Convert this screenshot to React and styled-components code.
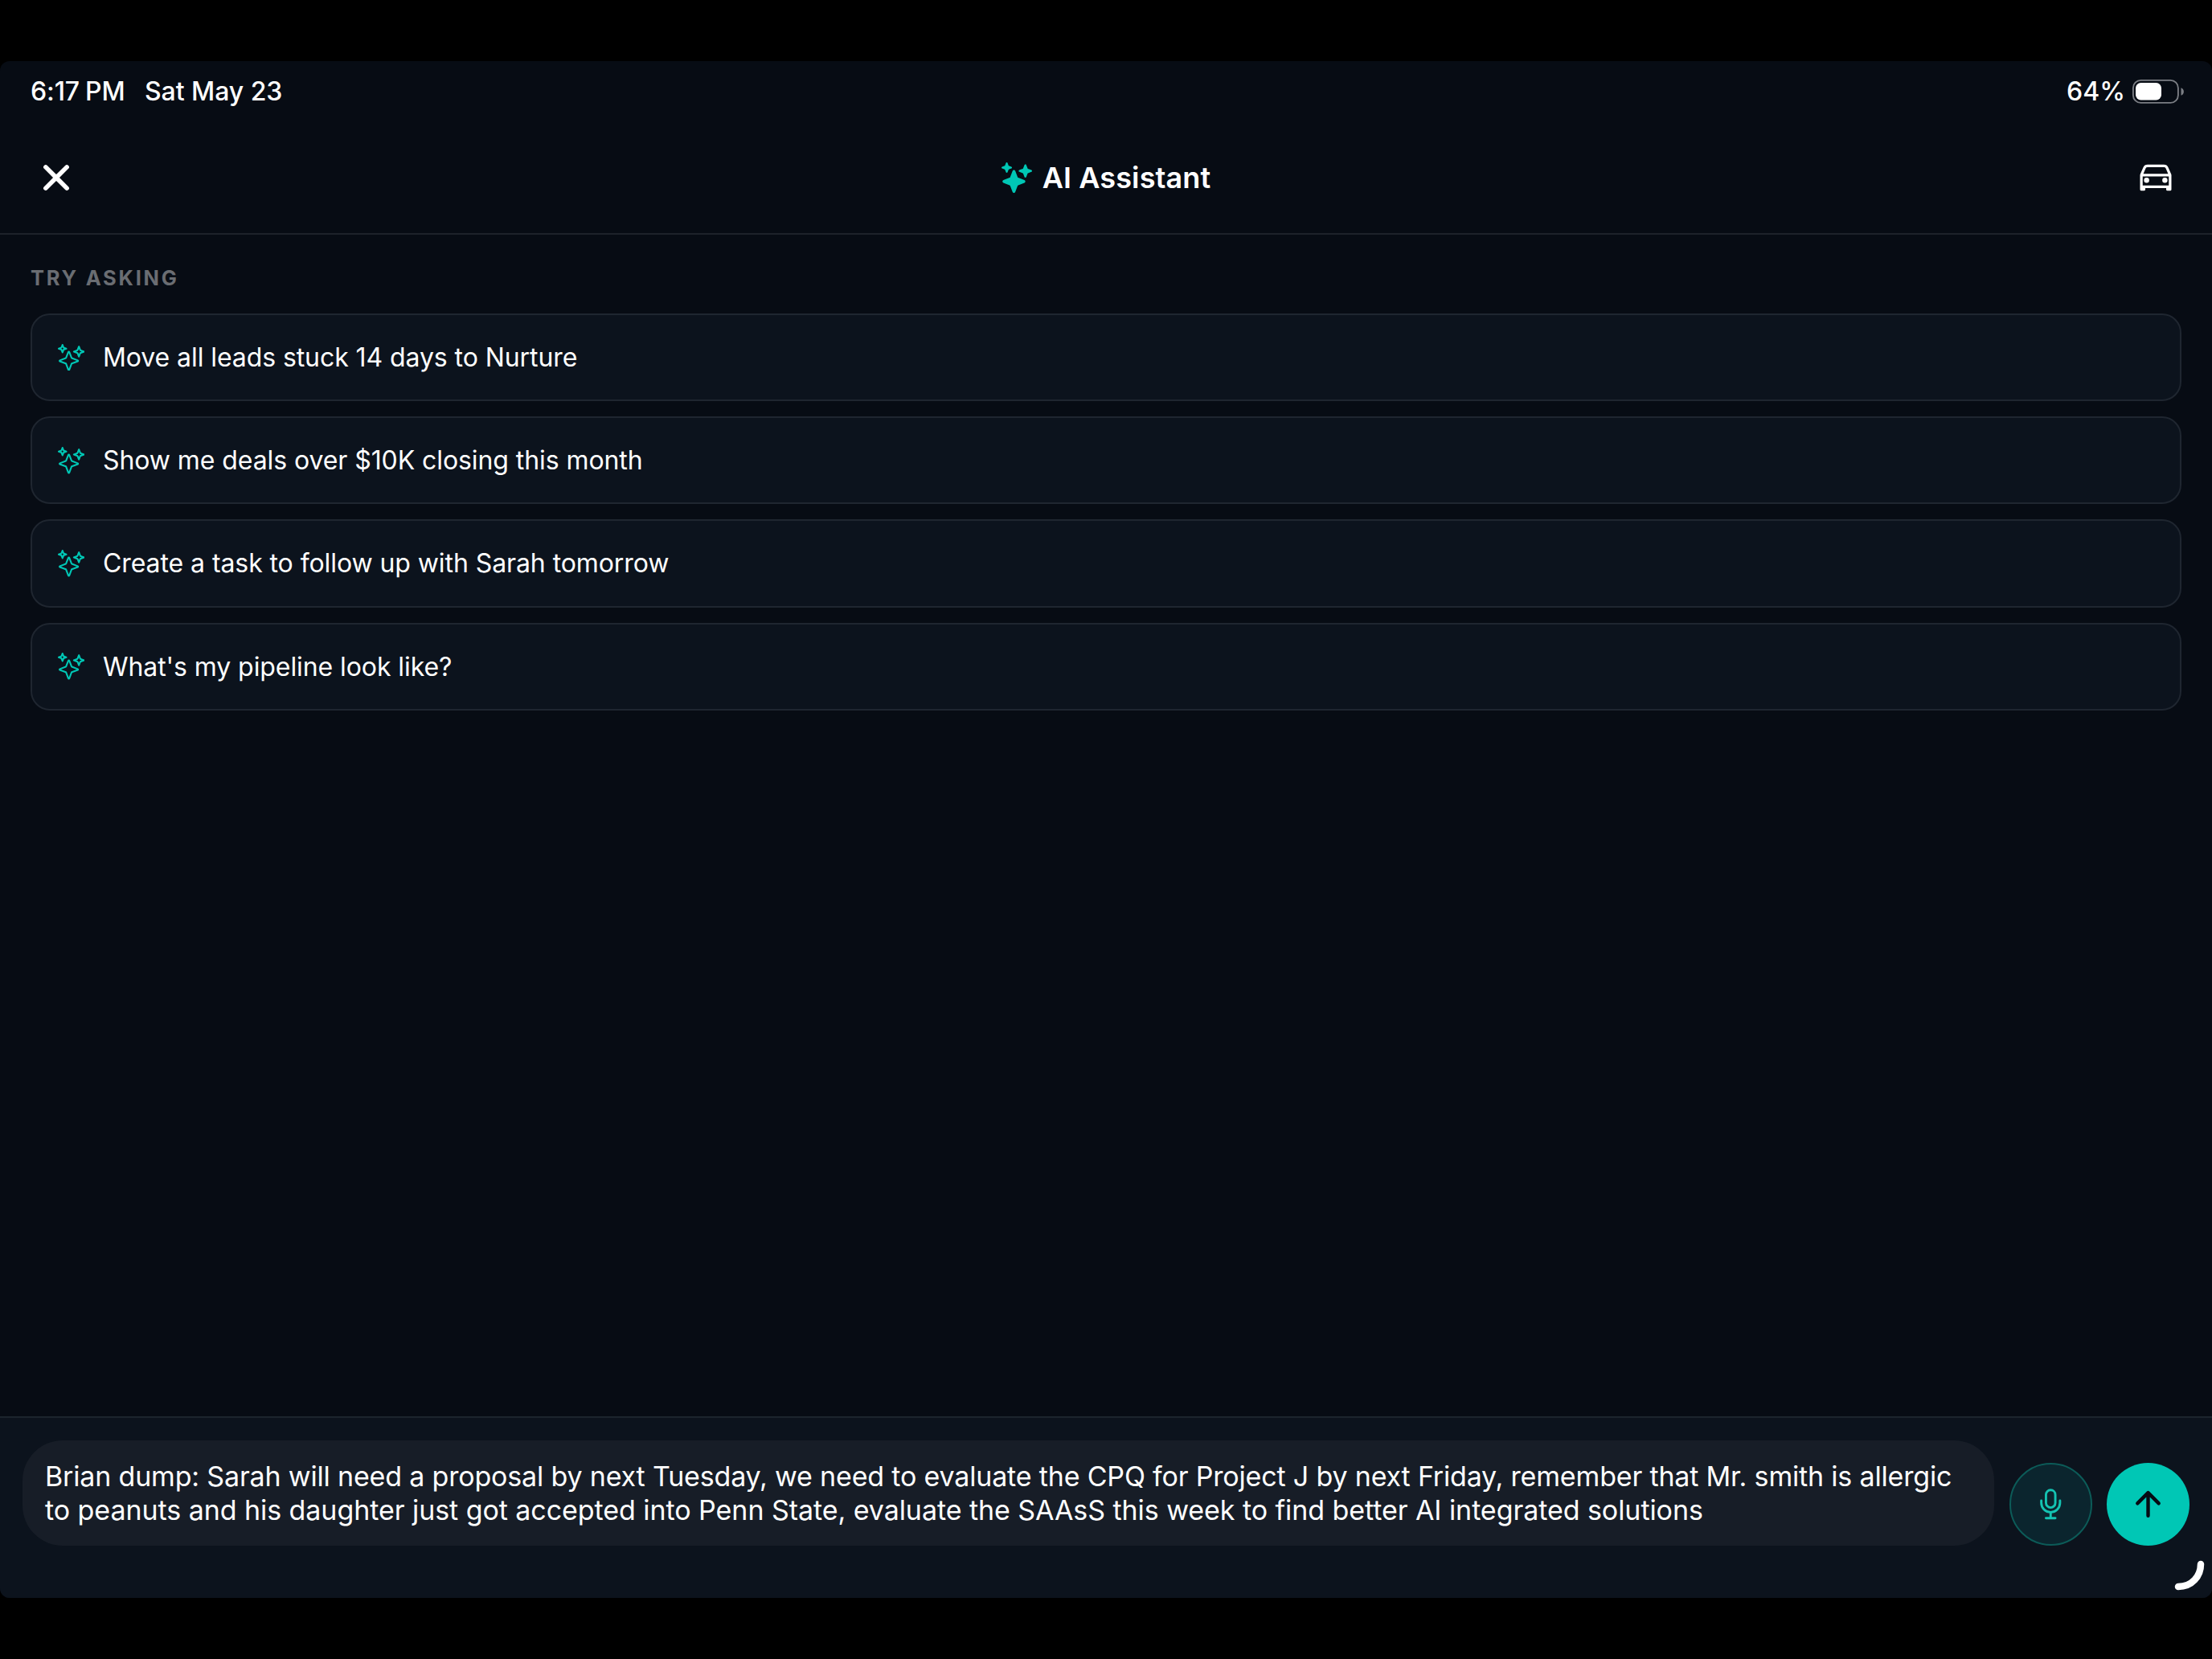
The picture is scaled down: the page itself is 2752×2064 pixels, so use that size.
import React from 'react';
import styled, { createGlobalStyle } from 'styled-components';
import {
    IoClose,
    IoSparkles,
    IoSparklesOutline,
    IoCarOutline,
    IoMicOutline,
    IoArrowUp,
} from 'react-icons/io5';

const suggestions = [
    { id: 1, text: 'Move all leads stuck 14 days to Nurture' },
    { id: 2, text: 'Show me deals over $10K closing this month' },
    { id: 3, text: 'Create a task to follow up with Sarah tomorrow' },
    { id: 4, text: "What's my pipeline look like?" },
];

const draft = [
    {
        id: 1,
        tracking: '-0.175px',
        text: 'Brian dump: Sarah will need a proposal by next Tuesday, we need to evaluate the CPQ for Project J by next Friday, remember that Mr. smith is allergic',
    },
    {
        id: 2,
        tracking: '-0.06px',
        text: 'to peanuts and his daughter just got accepted into Penn State, evaluate the SAAsS this week to find better AI integrated solutions',
    },
];

const Battery = () => (
    <svg width="66" height="32" viewBox="0 0 66 32">
        <rect x="1.9" y="1.9" width="56" height="28" rx="9.5" fill="none" stroke="#7b7e84" strokeWidth="1.9" />
        <rect x="5" y="5" width="32" height="21.5" rx="6.5" fill="#fff" />
        <path d="M61.5 11.2 C66 12.8 66 19.2 61.5 20.8 Z" fill="#7b7e84" />
    </svg>
);

const App = () => (
    <>
        <GlobalStyle />
        <ScreenStyle>
            <StatusBarStyle>
                <StatusGroupStyle>
                    <TimeStyle>6:17<span>PM</span></TimeStyle>
                    <DateStyle>Sat May 23</DateStyle>
                </StatusGroupStyle>
                <StatusGroupStyle>
                    <PercentStyle>64%</PercentStyle>
                    <Battery />
                </StatusGroupStyle>
            </StatusBarStyle>

            <HeaderStyle>
                <IconButtonStyle aria-label="Close"><IoClose size={60} /></IconButtonStyle>
                <TitleStyle>
                    <IoSparkles size={38} color="#00c7b5" />
                    <h1>AI Assistant</h1>
                </TitleStyle>
                <IconButtonStyle aria-label="Driving mode"><IoCarOutline size={52} /></IconButtonStyle>
            </HeaderStyle>

            <ContentStyle>
                <SectionLabelStyle>TRY ASKING</SectionLabelStyle>
                <SuggestionListStyle>
                    {suggestions.map(item => (
                        <SuggestionStyle key={item.id}>
                            <IoSparklesOutline size={33.5} color="#00c7b5" />
                            <span>{item.text}</span>
                        </SuggestionStyle>
                    ))}
                </SuggestionListStyle>
            </ContentStyle>

            <ComposerStyle>
                <DraftStyle>
                    {draft.map(line => (
                        <DraftLineStyle key={line.id} $tracking={line.tracking}>{line.text}</DraftLineStyle>
                    ))}
                </DraftStyle>
                <RoundButtonStyle aria-label="Dictate"><IoMicOutline size={46.5} /></RoundButtonStyle>
                <RoundButtonStyle $primary aria-label="Send"><IoArrowUp size={47} /></RoundButtonStyle>
            </ComposerStyle>

            <CornerHandleStyle width="40" height="40" viewBox="0 0 40 40">
                <path d="M34 6 C34 21 23 34 6 34" fill="none" stroke="#fff" strokeWidth="8.5" strokeLinecap="round" />
            </CornerHandleStyle>
        </ScreenStyle>
    </>
);

const GlobalStyle = createGlobalStyle`
    * {
        box-sizing: border-box;
    }

    body {
        margin: 0;
        padding: 76px 0;
        background-color: #000000;
        font-family: Inter, "Liberation Sans", sans-serif;
        color: #FFFFFF;
    }

    h1, h2, p, ul {
        margin: 0;
        padding: 0;
    }

    svg {
        display: block;
        flex-shrink: 0;
    }
`

const ScreenStyle = styled.main`
    position: relative;
    display: flex;
    flex-direction: column;
    height: 1912px;
    border-radius: 12px;
    overflow: hidden;
    background-color: #070C14;
`

const StatusBarStyle = styled.div`
    display: flex;
    justify-content: space-between;
    align-items: center;
    height: 76px;
    padding: 0 34px 1px 38px;
    font-size: 32px;
    font-weight: 500;
    white-space: nowrap;
`

const StatusGroupStyle = styled.div`
    display: flex;
    align-items: center;
`

const TimeStyle = styled.span`
    width: 142px;
    letter-spacing: -0.1px;

    span {
        margin-left: 7px;
    }
`

const DateStyle = styled.span`
    letter-spacing: -0.05px;
`

const PercentStyle = styled.span`
    margin-right: 8px;
`

const HeaderStyle = styled.header`
    display: flex;
    justify-content: space-between;
    align-items: center;
    height: 140px;
    padding: 0 38px;
    border-bottom: 2px solid #1D222A;
`

const IconButtonStyle = styled.button`
    display: flex;
    align-items: center;
    justify-content: center;
    width: 64px;
    height: 64px;
    padding: 0;
    border: 0;
    background: none;
    color: #FFFFFF;
`

const TitleStyle = styled.div`
    display: flex;
    align-items: center;
    gap: 13px;

    h1 {
        font-size: 36px;
        font-weight: 600;
        letter-spacing: 0.1px;
    }
`

const ContentStyle = styled.section`
    flex: 1;
    padding: 38px 38px 0;
`

const SectionLabelStyle = styled.h2`
    height: 60px;
    font-size: 25.5px;
    line-height: 32px;
    font-weight: 700;
    letter-spacing: 2.75px;
    color: #6A6D72;
`

const SuggestionListStyle = styled.ul`
    display: flex;
    flex-direction: column;
    gap: 19px;
    list-style: none;
`

const SuggestionStyle = styled.li`
    display: flex;
    align-items: center;
    gap: 23px;
    height: 109.2px;
    padding: 0 31.5px;
    border: 2px solid #1F2630;
    border-radius: 24px;
    background-color: #0C131D;
    font-size: 32px;
    letter-spacing: -0.08px;
    white-space: nowrap;
`

const ComposerStyle = styled.footer`
    display: flex;
    align-items: flex-end;
    gap: 18.5px;
    height: 226px;
    padding: 0 28px 65px;
    border-top: 2px solid #1C242D;
    background-color: #0C131D;
`

const DraftStyle = styled.div`
    flex: 1;
    height: 131px;
    padding: 24px 28px;
    border-radius: 50px;
    background-color: #171D27;
    font-size: 34px;
    line-height: 42px;
    white-space: nowrap;
`

const DraftLineStyle = styled.p`
    letter-spacing: ${props => props.$tracking};
`

const RoundButtonStyle = styled.button`
    display: flex;
    align-items: center;
    justify-content: center;
    width: 103px;
    height: 103px;
    padding: 0;
    border: ${props => (props.$primary ? '0' : '2px solid #0C5B58')};
    border-radius: 50%;
    background-color: ${props => (props.$primary ? '#00C7B5' : '#0B252E')};
    color: ${props => (props.$primary ? '#060B13' : '#14C3B2')};
`

// Resize grip that floats over the bottom right corner of the window
const CornerHandleStyle = styled.svg`
    position: absolute;
    right: 8px;
    bottom: 8px;
`

export default App;
